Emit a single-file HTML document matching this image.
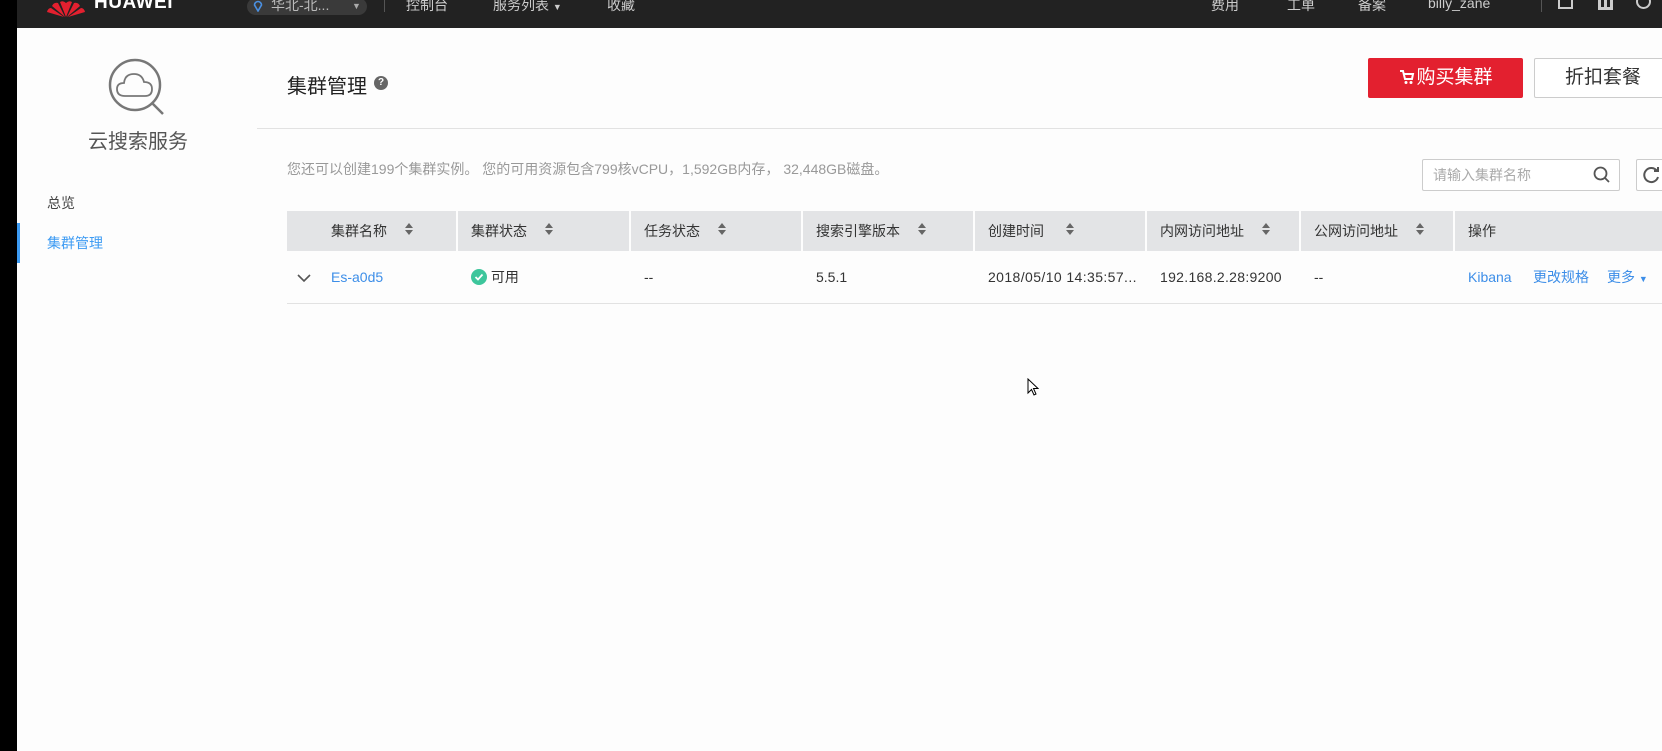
<!DOCTYPE html>
<html><head><meta charset="utf-8"><style>
*{margin:0;padding:0;box-sizing:border-box}
body{width:1662px;height:751px;overflow:hidden;background:#fdfdfd;font-family:"Liberation Sans","Noto Sans CJK SC",sans-serif;position:relative;color:#333}
.a{position:absolute;white-space:nowrap}
.top{position:absolute;left:17px;top:0;width:1645px;height:28px;background:#222}
.nav{color:#ccc;font-size:14px;top:-5px}
.th{position:absolute;top:211px;height:40px;background:#e3e4e6;font-size:14px;color:#333;line-height:40px;padding-left:13px;border-right:2px solid #fdfdfd}
.sort{display:inline-block;width:8px;margin-left:18px;vertical-align:middle;position:relative;top:-2px}
.td{position:absolute;top:251px;height:52px;line-height:52px;font-size:14px;color:#333;padding-left:13px}
.blue{color:#3d8ee8}
</style></head><body>
<div class="a" style="left:0;top:0;width:17px;height:751px;background:#000"></div>
<div class="top"></div>
<svg class="a" style="left:46px;top:0" width="40" height="18" viewBox="0 0 40 18"><g fill="#e3202f"><path d="M20 17 L14 2 Q17 0 20 3Z"/><path d="M20 17 L26 2 Q23 0 20 3Z"/><path d="M19 17 L6 6 Q8 2 12 3Z"/><path d="M21 17 L34 6 Q32 2 28 3Z"/><path d="M18 17 L1 12 Q2 8 5 8Z"/><path d="M22 17 L39 12 Q38 8 35 8Z"/></g></svg>
<div class="a" style="left:94px;top:-8px;color:#fff;font-weight:bold;font-size:19px;letter-spacing:0.5px">HUAWEI</div>
<div class="a" style="left:247px;top:-2px;width:120px;height:17px;background:#3a3a3a;border-radius:9px"></div>
<svg class="a" style="left:253px;top:0" width="10" height="12"><path d="M5 11 L1.5 5 A3.5 3.5 0 1 1 8.5 5Z" fill="none" stroke="#4a90e2" stroke-width="1.6"/></svg>
<div class="a nav" style="left:271px;color:#bbb">华北-北...</div>
<div class="a" style="left:352px;top:1px;color:#aaa;font-size:9px">▼</div>
<div class="a" style="left:384px;top:0;width:1px;height:12px;background:#555"></div>
<div class="a nav" style="left:406px">控制台</div>
<div class="a nav" style="left:493px">服务列表 <span style="font-size:9px">▼</span></div>
<div class="a nav" style="left:607px">收藏</div>
<div class="a nav" style="left:1211px">费用</div>
<div class="a nav" style="left:1287px">工单</div>
<div class="a nav" style="left:1358px">备案</div>
<div class="a nav" style="left:1428px">billy_zane</div>
<div class="a" style="left:1541px;top:0;width:1px;height:12px;background:#555"></div>
<div class="a" style="left:1558px;top:0;width:15px;height:9px;border:2px solid #ccc;border-top:none"></div>
<div class="a" style="left:1598px;top:0;width:15px;height:10px;border-bottom:3px solid #ccc;background:linear-gradient(90deg,#ccc 3px,transparent 3px,transparent 6px,#ccc 6px,#ccc 9px,transparent 9px,transparent 12px,#ccc 12px)"></div>
<div class="a" style="left:1636px;top:-6px;width:15px;height:15px;border:2px solid #ccc;border-radius:50%"></div>

<svg class="a" style="left:108px;top:58px" width="60" height="58" viewBox="0 0 60 58"><circle cx="27" cy="27" r="25" fill="none" stroke="#777" stroke-width="2.5"/><path d="M44 45 L55 56" stroke="#777" stroke-width="2.5"/><path d="M17 38 Q9 38 9 31 Q9 25 16 25 Q17 16 26 16 Q34 16 36 24 Q44 24 44 31 Q44 38 37 38Z" fill="none" stroke="#777" stroke-width="1.8"/></svg>
<div class="a" style="left:88px;top:125px;font-size:20px;color:#555">云搜索服务</div>
<div class="a" style="left:47px;top:193px;font-size:14px;color:#444">总览</div>
<div class="a" style="left:17px;top:223px;width:3px;height:40px;background:#3d9bf3"></div>
<div class="a" style="left:47px;top:233px;font-size:14px;color:#3d9bf3">集群管理</div>

<div class="a" style="left:287px;top:70px;font-size:20px;color:#222">集群管理</div>
<div class="a" style="left:374px;top:76px;width:14px;height:14px;border-radius:50%;background:#666;color:#fff;font-size:10px;font-weight:bold;text-align:center;line-height:14px">?</div>
<div class="a" style="left:257px;top:128px;width:1405px;height:1px;background:#e2e2e2"></div>
<div class="a" style="left:1368px;top:58px;width:155px;height:40px;background:#e3202f;border-radius:2px;color:#fff;font-size:19px;text-align:center;line-height:40px"><svg width="18" height="16" style="vertical-align:-2px" viewBox="0 0 16 16"><path d="M1 2 H4 L6 10 H13 L14 5 H5" fill="none" stroke="#fff" stroke-width="2"/><circle cx="7" cy="13.5" r="1.5" fill="#fff"/><circle cx="12" cy="13.5" r="1.5" fill="#fff"/></svg>购买集群</div>
<div class="a" style="left:1534px;top:58px;width:170px;height:40px;border:1px solid #ccc;border-radius:2px;font-size:19px;line-height:38px;padding-left:30px;color:#333;background:#fff">折扣套餐</div>
<div class="a" style="left:287px;top:159px;font-size:14px;color:#999">您还可以创建199个集群实例。 您的可用资源包含799核vCPU，1,592GB内存， 32,448GB磁盘。</div>
<div class="a" style="left:1422px;top:159px;width:198px;height:32px;border:1px solid #ccc;border-radius:2px;background:#fff;font-size:14px;color:#aaa;line-height:30px;padding-left:10px">请输入集群名称</div>
<svg class="a" style="left:1593px;top:166px" width="18" height="18"><circle cx="7.5" cy="7.5" r="6" fill="none" stroke="#555" stroke-width="1.8"/><path d="M12 12 L16 16" stroke="#555" stroke-width="1.8"/></svg>
<div class="a" style="left:1636px;top:159px;width:80px;height:32px;border:1px solid #ccc;border-radius:2px;background:#fff"></div>
<svg class="a" style="left:1642px;top:165px" width="20" height="20"><path d="M15 6 A7 7 0 1 0 16 12" fill="none" stroke="#555" stroke-width="2"/><path d="M12 6 L16 6 L16 2" fill="none" stroke="#555" stroke-width="2"/></svg>

<div class="th" style="left:287px;width:171px;padding-left:44px">集群名称<span class="sort"><svg width="8" height="12"><path d="M0 5L4 0L8 5Z M0 7L4 12L8 7Z" fill="#666"/></svg></span></div>
<div class="th" style="left:458px;width:173px">集群状态<span class="sort"><svg width="8" height="12"><path d="M0 5L4 0L8 5Z M0 7L4 12L8 7Z" fill="#666"/></svg></span></div>
<div class="th" style="left:631px;width:172px">任务状态<span class="sort"><svg width="8" height="12"><path d="M0 5L4 0L8 5Z M0 7L4 12L8 7Z" fill="#666"/></svg></span></div>
<div class="th" style="left:803px;width:172px">搜索引擎版本<span class="sort"><svg width="8" height="12"><path d="M0 5L4 0L8 5Z M0 7L4 12L8 7Z" fill="#666"/></svg></span></div>
<div class="th" style="left:975px;width:172px">创建时间<span class="sort" style="margin-left:22px"><svg width="8" height="12"><path d="M0 5L4 0L8 5Z M0 7L4 12L8 7Z" fill="#666"/></svg></span></div>
<div class="th" style="left:1147px;width:154px">内网访问地址<span class="sort"><svg width="8" height="12"><path d="M0 5L4 0L8 5Z M0 7L4 12L8 7Z" fill="#666"/></svg></span></div>
<div class="th" style="left:1301px;width:154px">公网访问地址<span class="sort"><svg width="8" height="12"><path d="M0 5L4 0L8 5Z M0 7L4 12L8 7Z" fill="#666"/></svg></span></div>
<div class="th" style="left:1455px;width:207px;border-right:none">操作</div>

<div class="a" style="left:287px;top:303px;width:1375px;height:1px;background:#e2e2e2"></div>
<svg class="a" style="left:297px;top:273px" width="14" height="10"><path d="M1 2 L7 8 L13 2" fill="none" stroke="#555" stroke-width="1.6"/></svg>
<div class="td blue" style="left:318px">Es-a0d5</div>
<div class="td" style="left:458px"><svg width="16" height="16" style="vertical-align:-3px"><circle cx="8" cy="8" r="8" fill="#3dc69c"/><path d="M4.5 8 L7 10.5 L11.5 5.5" fill="none" stroke="#fff" stroke-width="1.8"/></svg> 可用</div>
<div class="td" style="left:631px">--</div>
<div class="td" style="left:803px">5.5.1</div>
<div class="td" style="left:975px;letter-spacing:0.4px">2018/05/10 14:35:57...</div>
<div class="td" style="left:1147px;letter-spacing:0.3px">192.168.2.28:9200</div>
<div class="td" style="left:1301px">--</div>
<div class="td blue" style="left:1455px">Kibana</div>
<div class="td blue" style="left:1520px">更改规格</div>
<div class="td blue" style="left:1594px">更多 <span style="font-size:9px">▼</span></div>

<svg class="a" style="left:1027px;top:378px" width="14" height="20"><path d="M1 1 L1 15 L4.5 11.5 L7 17 L9 16 L6.5 10.5 L11 10.5Z" fill="#fff" stroke="#000" stroke-width="1"/></svg>
</body></html>
